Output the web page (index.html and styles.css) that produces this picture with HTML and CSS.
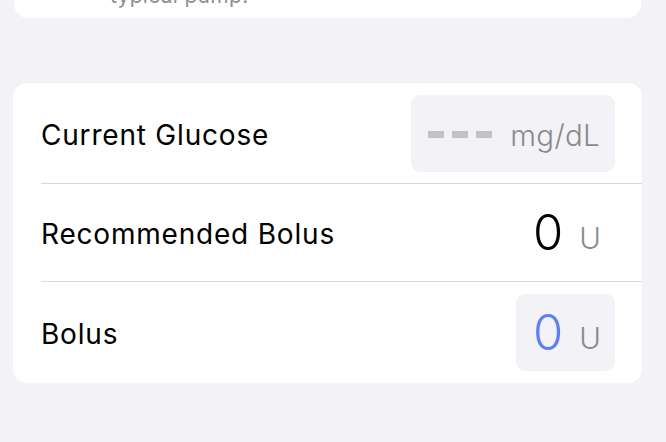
FILE: index.html
```html
<!DOCTYPE html>
<html>
<head>
<meta charset="utf-8">
<link rel="stylesheet" href="styles.css">
</head>
<body>
<div class="page">
  <div class="card card-top">
    <p class="footnote">typical pump.</p>
  </div>
  <div class="card card-main">
    <div class="row">
      <span class="label">Current Glucose</span>
      <div class="field field-wide">
        <span class="dashes"><i></i><i></i><i></i></span>
        <span class="unit">mg/dL</span>
      </div>
    </div>
    <div class="row">
      <span class="label">Recommended Bolus</span>
      <div class="field field-plain">
        <span class="num">0</span>
        <span class="unit">U</span>
      </div>
    </div>
    <div class="row">
      <span class="label">Bolus</span>
      <div class="field field-box">
        <span class="num num-blue">0</span>
        <span class="unit">U</span>
      </div>
    </div>
  </div>
</div>
</body>
</html>
```
FILE: styles.css
```css
html, body {
  margin: 0;
  padding: 0;
  background: #f2f2f7;
  font-family: "Inter", "Noto Sans", "Liberation Sans", sans-serif;
  width: 666px;
  height: 442px;
  overflow: hidden;
}
.page {
  display: flex;
  flex-direction: column;
}
.card {
  background: #ffffff;
  border-radius: 14px;
}
.card-top {
  margin: -40px 25px 0 14px;
  height: 58px;
  overflow: hidden;
  display: flex;
  align-items: flex-end;
}
.footnote {
  margin: 0 0 10px 96px;
  font-size: 21px;
  line-height: 24px;
  color: #8e8e93;
  letter-spacing: 0.3px;
}
.card-main {
  margin: 65px 24px 0 13px;
  display: flex;
  flex-direction: column;
}
.row {
  height: 101px;
  display: flex;
  align-items: center;
  justify-content: space-between;
  padding: 0 27px 0 0;
  margin-left: 28px;
  border-bottom: 1px solid #d9d9dd;
  box-sizing: border-box;
}
.row:nth-child(2) {
  height: 98px;
}
.row:last-child {
  border-bottom: none;
  height: 101px;
}
.label {
  font-size: 28px;
  color: #000;
  letter-spacing: 0.8px;
  margin-top: 3px;
}
.field {
  display: flex;
  height: 77px;
  border-radius: 9px;
  box-sizing: border-box;
  padding: 0 16px 0 17px;
  align-items: center;
}
.field-wide {
  width: 204px;
  background: #f2f2f7;
  justify-content: space-between;
  padding-right: 15px;
}
.field-box {
  width: 99px;
  background: #f2f2f7;
}
.field-plain {
  width: 99px;
}
.dashes {
  display: flex;
  gap: 8px;
  margin-top: 2px;
}
.dashes i {
  display: block;
  width: 16px;
  height: 7px;
  background: #c2c2c6;
}
.unit {
  font-size: 29.5px;
  color: #8a8a8e;
  line-height: 1;
  font-weight: 300;
  letter-spacing: 0.3px;
}
.field-wide .unit {
  margin-top: 5px;
}
.num {
  font-size: 49px;
  line-height: 1;
  color: #000;
  margin-right: 16px;
  font-weight: 300;
}
.num-blue {
  color: #5d7ff5;
}
.field-plain .unit,
.field-box .unit {
  margin-top: 12px;
}
```
